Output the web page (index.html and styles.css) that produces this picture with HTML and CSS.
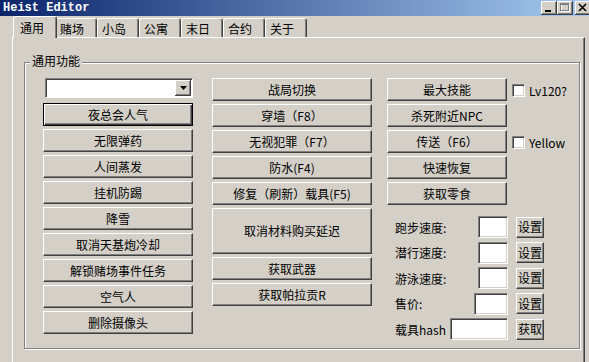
FILE: index.html
```html
<!DOCTYPE html>
<html lang="zh-CN">
  <head>
    <meta charset="UTF-8" />
    <meta name="viewport" content="width=device-width, initial-scale=1.0" />
    <title>Heist Editor</title>
    <link rel="stylesheet" href="styles.css">
  </head>
  <body>
    <div class="window">
      <!-- Title bar -->
      <div class="titlebar">
        <span class="title">Heist Editor</span>
        <div class="controls">
          <span class="ctl">
            <svg width="16" height="14" viewBox="0 0 16 14"><rect x="4" y="9" width="6" height="2" fill="#000"/></svg>
          </span>
          <span class="ctl">
            <svg width="16" height="14" viewBox="0 0 16 14">
              <rect x="4.5" y="3.5" width="8" height="7" fill="none" stroke="#fff"/>
              <rect x="3.5" y="2.5" width="8" height="7" fill="none" stroke="#808080"/>
              <line x1="3" y1="3.5" x2="12" y2="3.5" stroke="#808080"/>
            </svg>
          </span>
          <span class="ctl ctl-close">
            <svg width="16" height="14" viewBox="0 0 16 14">
              <path d="M4 3 L11 10 M11 3 L4 10" stroke="#000" stroke-width="1.6"/>
            </svg>
          </span>
        </div>
      </div>

      <!-- Tabs -->
      <div class="tabs">
        <div class="tab active">通用</div>
        <div class="tab">赌场</div>
        <div class="tab">小岛</div>
        <div class="tab">公寓</div>
        <div class="tab">末日</div>
        <div class="tab">合约</div>
        <div class="tab">关于</div>
      </div>

      <div class="panel">
        <div class="group">
          <span class="group-title">通用功能</span>
          <div class="cols">
            <!-- Column 1 -->
            <div class="col col-a">
              <div class="combo"><span class="combo-arrow"><svg width="7" height="4" viewBox="0 0 7 4"><polygon points="0,0 7,0 3.5,4" fill="#000"/></svg></span></div>
              <button class="btn btn-default">夜总会人气</button>
              <button class="btn">无限弹药</button>
              <button class="btn">人间蒸发</button>
              <button class="btn">挂机防踢</button>
              <button class="btn">降雪</button>
              <button class="btn">取消天基炮冷却</button>
              <button class="btn">解锁赌场事件任务</button>
              <button class="btn">空气人</button>
              <button class="btn">删除摄像头</button>
            </div>

            <!-- Column 2 -->
            <div class="col col-b">
              <button class="btn">战局切换</button>
              <button class="btn">穿墙（F8）</button>
              <button class="btn">无视犯罪（F7）</button>
              <button class="btn">防水(F4)</button>
              <button class="btn">修复（刷新）载具(F5)</button>
              <button class="btn btn-tall">取消材料购买延迟</button>
              <button class="btn">获取武器</button>
              <button class="btn">获取帕拉贡R</button>
            </div>

            <!-- Column 3 -->
            <div class="col col-c">
              <div class="quick">
                <button class="btn">最大技能</button>
                <button class="btn">杀死附近NPC</button>
                <button class="btn">传送（F6）</button>
                <button class="btn">快速恢复</button>
                <button class="btn">获取零食</button>
                <label class="check check-1"><span class="box"></span>Lv120?</label>
                <label class="check check-3"><span class="box"></span>Yellow</label>
              </div>

              <div class="fields">
                <div class="field"><span>跑步速度:</span><span class="input"></span><button class="btn btn-sm">设置</button></div>
                <div class="field"><span>潜行速度:</span><span class="input"></span><button class="btn btn-sm">设置</button></div>
                <div class="field"><span>游泳速度:</span><span class="input"></span><button class="btn btn-sm">设置</button></div>
                <div class="field"><span>售价:</span><span class="input input-price"></span><button class="btn btn-sm">设置</button></div>
                <div class="field"><span>载具hash</span><span class="input input-hash"></span><button class="btn btn-sm">获取</button></div>
              </div>
            </div>
          </div>
        </div>
      </div>
    </div>
  </body>
</html>
```

FILE: styles.css
```css
* {
  box-sizing: border-box;
}

body {
  margin: 0;
  background-color: #d4d0c8;
  font-family: "Noto Sans CJK SC", "Liberation Sans", sans-serif;
  font-size: 12px;
  color: #000;
  overflow: hidden;
}

.window {
  width: 589px;
  height: 362px;
  overflow: hidden;
}

/* title bar */
.titlebar {
  height: 16px;
  display: flex;
  align-items: flex-start;
  background: linear-gradient(to right, #0a246a, #a6caf0);
}

.title {
  font: bold 12px/14px "Liberation Mono", monospace;
  color: #fff;
  margin: 1px 0 0 3px;
}

.controls {
  display: flex;
  margin: 1px -2px 0 auto;
}

.ctl {
  display: block;
  width: 16px;
  height: 14px;
  background-color: #d4d0c8;
  box-shadow: inset -1px -1px #404040, inset 1px 1px #fff, inset -2px -2px #808080;
}

.ctl svg {
  display: block;
}

.ctl-close {
  margin-left: 2px;
}

/* tabs */
.tabs {
  display: flex;
  align-items: flex-end;
  height: 21px;
  padding-left: 15px;
}

.tab {
  width: 42px;
  height: 19px;
  padding: 1px 0 0 4px;
  line-height: 17px;
  border: 1px solid;
  border-bottom: none;
  border-color: #fff #404040 transparent #fff;
  border-radius: 3px 3px 0 0;
  box-shadow: inset -1px 0 #808080;
}

.tab.active {
  position: relative;
  z-index: 1;
  width: 44px;
  height: 22px;
  margin: 0 -2px -1px;
  padding: 2px 0 0 6px;
  background-color: #d4d0c8;
}

/* tab page */
.panel {
  margin-left: 12px;
  width: 573px;
  height: 340px;
  padding: 24px 0 0 11px;
  border: 1px solid;
  border-color: #fff #404040 #404040 #fff;
  box-shadow: inset -1px -1px #808080;
}

.group {
  width: 556px;
  height: 287px;
  border: 1px solid #808080;
  box-shadow: inset 1px 1px #fff, 1px 1px #fff;
}

.group-title {
  display: block;
  width: fit-content;
  margin: -9px 0 0 5px;
  padding: 0 2px;
  line-height: 14px;
  background-color: #d4d0c8;
}

.cols {
  display: flex;
  align-items: flex-start;
  margin: 10px 0 0 18px;
}

.col {
  display: flex;
  flex-direction: column;
  gap: 3px;
}

.col-a {
  width: 150px;
}

.col-b {
  width: 160px;
  margin-left: 19px;
}

.col-c {
  margin-left: 15px;
  gap: 0;
}

/* buttons */
.btn {
  display: flex;
  align-items: center;
  justify-content: center;
  height: 23px;
  padding: 0;
  font: inherit;
  line-height: 1;
  color: #000;
  background-color: #d4d0c8;
  border: 1px solid;
  border-color: #fff #404040 #404040 #fff;
  box-shadow: inset -1px -1px #808080;
}

.btn-default {
  border-color: #000;
  box-shadow: inset 1px 1px #fff, inset -1px -1px #404040, inset -2px -2px #808080;
}

.btn-tall {
  height: 46px;
}

/* combobox */
.combo {
  display: flex;
  justify-content: flex-end;
  width: 148px;
  height: 20px;
  margin: 0 0 2px 2px;
  padding: 1px;
  background-color: #fff;
  border: 1px solid;
  border-color: #808080 #fff #fff #808080;
  box-shadow: inset 1px 1px #404040;
}

.combo-arrow {
  display: flex;
  align-items: center;
  justify-content: center;
  width: 16px;
  height: 16px;
  background-color: #d4d0c8;
  box-shadow: inset -1px -1px #404040, inset 1px 1px #fff, inset -2px -2px #808080;
}

.combo-arrow svg {
  display: block;
}

/* right column */
.quick {
  display: grid;
  grid-template-columns: 120px auto;
  column-gap: 5px;
  row-gap: 3px;
}

.quick .btn {
  grid-column: 1;
}

.check {
  grid-column: 2;
  display: flex;
  align-items: center;
  gap: 4px;
  padding-top: 1px;
}

.check-1 {
  grid-row: 1;
}

.check-3 {
  grid-row: 3;
}

.box,
.input {
  display: block;
  background-color: #fff;
  border: 1px solid;
  border-color: #808080 #fff #fff #808080;
  box-shadow: inset 1px 1px #404040, inset -1px -1px #d4d0c8;
}

.box {
  width: 13px;
  height: 13px;
}

.fields {
  display: flex;
  flex-direction: column;
  gap: 3.5px;
  width: 157px;
  margin-top: 11px;
}

.field {
  display: flex;
  align-items: center;
  height: 22px;
  padding-left: 8px;
}

.input {
  width: 30px;
  height: 22px;
  margin-left: auto;
}

.input-price {
  width: 34px;
}

.input-hash {
  width: 58px;
}

.btn-sm {
  width: 28px;
  height: 21px;
  margin-left: 8px;
}
```
